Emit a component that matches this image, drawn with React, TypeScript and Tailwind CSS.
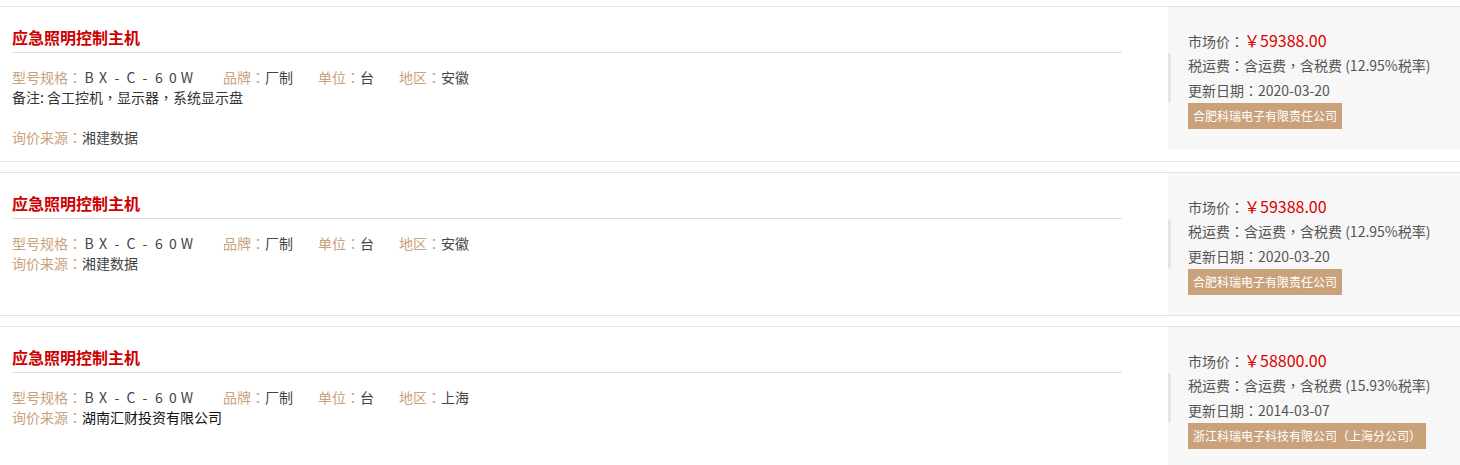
import React from "react";

type Item = {
  region: string;
  remark?: string;
  source: string;
  sourceDark?: boolean;
  price: string;
  tax: string;
  date: string;
  company: string;
};

const items: Item[] = [
  {
    region: "安徽",
    remark: "备注: 含工控机，显示器，系统显示盘",
    source: "湘建数据",
    price: "59388.00",
    tax: "含运费，含税费 (12.95%税率)",
    date: "2020-03-20",
    company: "合肥科瑞电子有限责任公司",
  },
  {
    region: "安徽",
    source: "湘建数据",
    price: "59388.00",
    tax: "含运费，含税费 (12.95%税率)",
    date: "2020-03-20",
    company: "合肥科瑞电子有限责任公司",
  },
  {
    region: "上海",
    source: "湖南汇财投资有限公司",
    sourceDark: true,
    price: "58800.00",
    tax: "含运费，含税费 (15.93%税率)",
    date: "2014-03-07",
    company: "浙江科瑞电子科技有限公司（上海分公司）",
  },
];

const TC = { fontFamily: '"Noto Sans CJK TC", "Noto Sans", sans-serif' };

function P({ text }: { text: string }) {
  const parts = text.split(/([：，（）])/);
  return (
    <>
      {parts.map((p, i) =>
        /^[：，（）]$/.test(p) ? (
          <span key={i} style={TC}>
            {p}
          </span>
        ) : (
          <React.Fragment key={i}>{p}</React.Fragment>
        )
      )}
    </>
  );
}

function Model() {
  const chars = ["B", "X", "-", "C", "-", "6", "0", "W"];
  return (
    <>
      {chars.map((c, i) => (
        <span key={i} className="inline-block w-[14px] text-center">
          {c}
        </span>
      ))}
    </>
  );
}

function Label({ text }: { text: string }) {
  return (
    <span className="text-[#c9a27c]">
      <P text={text} />
    </span>
  );
}

function Card({ it }: { it: Item }) {
  return (
    <div className="flex items-start border-y border-[#e2e2e2] mb-[10px] bg-white">
      <div className="flex-1 pl-[12px] pr-[46px] pt-[18px] pb-[14px]">
        <div className="text-[16px] leading-[24px] font-bold text-[#cc0000] pb-[3px] border-b border-[#dddddd]">
          应急照明控制主机
        </div>
        <div className="mt-[14px] text-[14px] leading-[20px] text-[#444]">
          <div className="flex">
            <div className="w-[211px] whitespace-nowrap">
              <Label text="型号规格：" />
              <Model />
            </div>
            <div className="w-[95px] whitespace-nowrap">
              <Label text="品牌：" />
              厂制
            </div>
            <div className="w-[81px] whitespace-nowrap">
              <Label text="单位：" />台
            </div>
            <div className="whitespace-nowrap">
              <Label text="地区：" />
              {it.region}
            </div>
          </div>
          {it.remark && (
            <>
              <div className="text-[#333]">
                <P text={it.remark} />
              </div>
              <div className="h-[20px]" />
            </>
          )}
          <div>
            <Label text="询价来源：" />
            <span className={it.sourceDark ? "text-[#111]" : "text-[#444]"}>{it.source}</span>
          </div>
        </div>
      </div>
      <div className="relative w-[292px] h-[142px] bg-[#f7f7f7] pl-[20px] pt-[21px] text-[14px] leading-[25px] text-[#555]">
        <div className="absolute left-0 top-[46px] w-[3px] h-[50px] rounded-full bg-[#e6e6e6]" />
        <div className="whitespace-nowrap h-[25px]">
          <P text="市场价：" />
          <span className="text-[#dd0000] text-[16px] leading-[25px]">￥{it.price}</span>
        </div>
        <div className="whitespace-nowrap">
          <P text={"税运费：" + it.tax} />
        </div>
        <div className="whitespace-nowrap">
          <P text={"更新日期：" + it.date} />
        </div>
        <div className="inline-block bg-[#c9a27c] text-white text-[12px] leading-[26px] px-[5px] whitespace-nowrap">
          <P text={it.company} />
        </div>
      </div>
    </div>
  );
}

export default function App() {
  return (
    <div
      className="w-[1460px] h-[465px] overflow-hidden bg-white pt-[6px]"
      style={{ fontFamily: '"Noto Sans CJK SC", "Noto Sans", sans-serif' }}
    >
      {items.map((it, i) => (
        <Card key={i} it={it} />
      ))}
    </div>
  );
}
